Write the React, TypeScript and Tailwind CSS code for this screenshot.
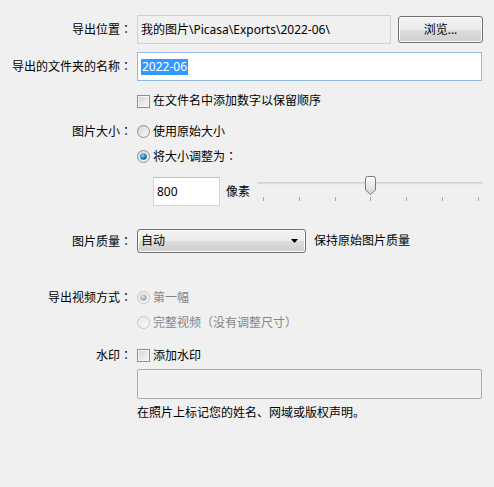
import React from "react";

const FONT = "font-['Noto_Sans','Noto_Sans_CJK_SC',sans-serif]";

function withColon(text: string) {
  if (text.endsWith("：")) {
    return (
      <>
        {text.slice(0, -1)}
        <span className="font-['Noto_Sans_CJK_JP',sans-serif]">：</span>
      </>
    );
  }
  return text;
}

function Label({ children }: { children?: string }) {
  return <div className="text-right whitespace-nowrap leading-[16px]">{children ? withColon(children) : null}</div>;
}

function Row({
  label,
  className,
  children,
}: {
  label?: string;
  className: string;
  children: React.ReactNode;
}) {
  return (
    <div className={`grid grid-cols-[132px_1fr] gap-x-[5px] items-center ${className}`}>
      <Label>{label}</Label>
      <div className="flex items-center h-full">{children}</div>
    </div>
  );
}

function Checkbox() {
  return (
    <div className="w-[13px] h-[13px] border border-[#8f8f8f] bg-[#f4f4f4] p-[1px] shrink-0">
      <div className="w-full h-full bg-[linear-gradient(135deg,#d6d6d6,#f6f6f6)]" />
    </div>
  );
}

function Radio({ checked, disabled }: { checked?: boolean; disabled?: boolean }) {
  const id = `rg${checked ? 1 : 0}${disabled ? 1 : 0}`;
  return (
    <svg width="13" height="13" viewBox="0 0 13 13" className="shrink-0">
      <defs>
        <linearGradient id={id} x1="0" y1="0" x2="1" y2="1">
          <stop offset="0" stopColor={disabled ? "#e6e6e6" : "#d5d5d5"} />
          <stop offset="1" stopColor="#fbfbfb" />
        </linearGradient>
        <radialGradient id="dotBlue" cx="0.4" cy="0.35" r="0.7">
          <stop offset="0" stopColor="#8fd3ff" />
          <stop offset="0.6" stopColor="#1e7fc8" />
          <stop offset="1" stopColor="#10406a" />
        </radialGradient>
        <radialGradient id="dotGray" cx="0.4" cy="0.35" r="0.7">
          <stop offset="0" stopColor="#e0e0e0" />
          <stop offset="1" stopColor="#9a9a9a" />
        </radialGradient>
      </defs>
      <circle
        cx="6.5"
        cy="6.5"
        r="6"
        fill={`url(#${id})`}
        stroke={disabled ? "#c4c4c4" : "#8f8f8f"}
        strokeWidth="1"
      />
      {checked && (
        <circle cx="6.5" cy="6.5" r="3.3" fill={disabled ? "url(#dotGray)" : "url(#dotBlue)"} />
      )}
    </svg>
  );
}

function Slider() {
  const ticks = [6, 42, 78, 113, 149, 185, 221];
  return (
    <svg width="227" height="30" viewBox="0 0 227 30" className="self-start -mt-[2px]">
      <line x1="0.5" y1="8" x2="226" y2="8" stroke="#b4b4b4" strokeWidth="1" />
      <line x1="0.5" y1="9" x2="226" y2="9" stroke="#e6e6e6" strokeWidth="1" />
      {ticks.map((t) => (
        <line key={t} x1={t + 0.5} y1="22" x2={t + 0.5} y2="26" stroke="#a8a8a8" strokeWidth="1" />
      ))}
      <defs>
        <linearGradient id="thumb" x1="0" y1="0" x2="0" y2="1">
          <stop offset="0" stopColor="#fafafa" />
          <stop offset="0.6" stopColor="#e6e6e6" />
          <stop offset="1" stopColor="#cfcfcf" />
        </linearGradient>
      </defs>
      <path
        d="M108.5 3.5 Q108.5 1.5 110.5 1.5 L116.5 1.5 Q118.5 1.5 118.5 3.5 L118.5 15 L113.5 19.5 L108.5 15 Z"
        fill="url(#thumb)"
        stroke="#7a7a7a"
        strokeWidth="1"
      />
    </svg>
  );
}

export default function App() {
  return (
    <div className={`w-[494px] h-[487px] bg-[#f0f0f0] text-[12px] text-black ${FONT} flex flex-col`}>
      <Row label="导出位置：" className="mt-[15px] h-[29px]">
        <div className="w-[254px] h-[29px] border border-[#c5d3df] bg-[#f0f0f0] flex items-center pl-[3px] whitespace-nowrap">
          我的图片\Picasa\Exports\2022-06\
        </div>
        <div className="ml-[7px] w-[85px] h-[27px] border border-[#707070] rounded-[3px] shadow-[inset_0_0_0_1px_#fbfbfb] bg-[linear-gradient(#f2f2f2_0%,#ebebeb_50%,#dddddd_50%,#cfcfcf_100%)] flex items-center justify-center">
          浏览...
        </div>
      </Row>

      <Row label="导出的文件夹的名称：" className="mt-[8px] h-[29px]">
        <div className="w-[345px] h-[29px] border border-[#8fb9e2] bg-white flex items-center pl-[3px]">
          <span className="bg-[#3399ff] text-white leading-[16px] px-[1px]">2022-06</span>
        </div>
      </Row>

      <Row className="mt-[12px] h-[13px]">
        <Checkbox />
        <span className="ml-[3px] leading-[16px]">在文件名中添加数字以保留顺序</span>
      </Row>

      <Row label="图片大小：" className="mt-[17px] h-[13px]">
        <Radio />
        <span className="ml-[3px] leading-[16px]">使用原始大小</span>
      </Row>

      <Row className="mt-[12px] h-[13px]">
        <Radio checked />
        <span className="ml-[3px] leading-[16px]">{withColon("将大小调整为：")}</span>
      </Row>

      <Row className="mt-[16px] h-[29px]">
        <div className="ml-[16px] w-[67px] h-[29px] border border-[#d6d6d6] border-t-[#c0c0c0] bg-white flex items-center pl-[3px]">
          800
        </div>
        <span className="ml-[6px] mr-[7px] leading-[16px]">像素</span>
        <Slider />
      </Row>

      <Row label="图片质量：" className="mt-[23px] h-[24px]">
        <div className="w-[169px] h-[24px] border border-[#707070] rounded-[3px] shadow-[inset_0_0_0_1px_#fbfbfb] bg-[linear-gradient(#f2f2f2_0%,#ebebeb_50%,#dddddd_50%,#cfcfcf_100%)] flex items-center justify-between pl-[3px] pr-[6px]">
          <span>自动</span>
          <svg width="8" height="5" viewBox="0 0 8 5">
            <path d="M0 0 L7 0 L3.5 4 Z" fill="#000" />
          </svg>
        </div>
        <span className="ml-[8px] leading-[16px]">保持原始图片质量</span>
      </Row>

      <Row label="导出视频方式：" className="mt-[36px] h-[13px]">
        <Radio checked disabled />
        <span className="ml-[3px] leading-[16px] text-[#858585]">第一幅</span>
      </Row>

      <Row className="mt-[12px] h-[13px]">
        <Radio disabled />
        <span className="ml-[3px] leading-[16px] text-[#858585]">
          完整视频<span className="font-['Noto_Sans_CJK_JP',sans-serif]">（</span>没有调整尺寸<span className="font-['Noto_Sans_CJK_JP',sans-serif]">）</span>
        </span>
      </Row>

      <Row label="水印：" className="mt-[20px] h-[13px]">
        <Checkbox />
        <span className="ml-[3px] leading-[16px]">添加水印</span>
      </Row>

      <Row className="mt-[9px] h-[30px]">
        <div className="w-[345px] h-[30px] border border-[#adadad] rounded-[2px] bg-[#f0f0f0]" />
      </Row>

      <Row className="mt-[6px] h-[16px]">
        <span className="leading-[16px]">在照片上标记您的姓名、网域或版权声明。</span>
      </Row>
    </div>
  );
}
